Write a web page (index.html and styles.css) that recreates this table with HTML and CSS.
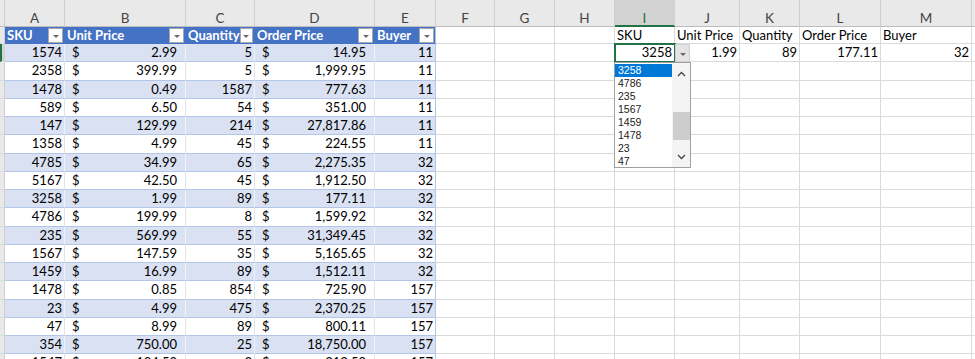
FILE: index.html
```html
<!DOCTYPE html>
<html lang="en">
<head>
    <meta charset="UTF-8">
    <title>Orders - Sheet1</title>
    <link rel="stylesheet" href="styles.css">
</head>
<body>
<div class="sheet">
    <!-- column letters -->
    <div class="row cols">
        <div></div><div>A</div><div>B</div><div>C</div><div>D</div><div>E</div><div>F</div><div>G</div><div>H</div><div class="sel">I</div><div>J</div><div>K</div><div>L</div><div>M</div><div></div>
    </div>

    <!-- table header + lookup header -->
    <div class="row first">
        <div class="rh"></div>
        <div class="th"><span>SKU</span><i class="filter"></i></div>
        <div class="th"><span>Unit Price</span><i class="filter"></i></div>
        <div class="th"><span>Quantity</span><i class="filter"></i></div>
        <div class="th"><span>Order Price</span><i class="filter"></i></div>
        <div class="th end"><span>Buyer</span><i class="filter"></i></div>
        <div></div><div></div><div></div>
        <div>SKU</div><div>Unit Price</div><div>Quantity</div><div>Order Price</div><div>Buyer</div><div></div>
    </div>

    <div class="row band">
        <div class="rh active"></div>
        <div class="t num">1574</div><div class="t acc"><span>$</span><span>2.99</span></div><div class="t num">5</div><div class="t acc"><span>$</span><span>14.95</span></div><div class="t num end">11</div>
        <div></div><div></div><div></div>
        <div class="num current">3258</div><div class="num">1.99</div><div class="num">89</div><div class="num">177.11</div><div class="num">32</div><div></div>
    </div>
    <div class="row">
        <div class="rh"></div>
        <div class="t num">2358</div><div class="t acc"><span>$</span><span>399.99</span></div><div class="t num">5</div><div class="t acc"><span>$</span><span>1,999.95</span></div><div class="t num end">11</div>
        <div></div><div></div><div></div><div></div><div></div><div></div><div></div><div></div><div></div>
    </div>
    <div class="row band">
        <div class="rh"></div>
        <div class="t num">1478</div><div class="t acc"><span>$</span><span>0.49</span></div><div class="t num">1587</div><div class="t acc"><span>$</span><span>777.63</span></div><div class="t num end">11</div>
        <div></div><div></div><div></div><div></div><div></div><div></div><div></div><div></div><div></div>
    </div>
    <div class="row">
        <div class="rh"></div>
        <div class="t num">589</div><div class="t acc"><span>$</span><span>6.50</span></div><div class="t num">54</div><div class="t acc"><span>$</span><span>351.00</span></div><div class="t num end">11</div>
        <div></div><div></div><div></div><div></div><div></div><div></div><div></div><div></div><div></div>
    </div>
    <div class="row band">
        <div class="rh"></div>
        <div class="t num">147</div><div class="t acc"><span>$</span><span>129.99</span></div><div class="t num">214</div><div class="t acc"><span>$</span><span>27,817.86</span></div><div class="t num end">11</div>
        <div></div><div></div><div></div><div></div><div></div><div></div><div></div><div></div><div></div>
    </div>
    <div class="row">
        <div class="rh"></div>
        <div class="t num">1358</div><div class="t acc"><span>$</span><span>4.99</span></div><div class="t num">45</div><div class="t acc"><span>$</span><span>224.55</span></div><div class="t num end">11</div>
        <div></div><div></div><div></div><div></div><div></div><div></div><div></div><div></div><div></div>
    </div>
    <div class="row band">
        <div class="rh"></div>
        <div class="t num">4785</div><div class="t acc"><span>$</span><span>34.99</span></div><div class="t num">65</div><div class="t acc"><span>$</span><span>2,275.35</span></div><div class="t num end">32</div>
        <div></div><div></div><div></div><div></div><div></div><div></div><div></div><div></div><div></div>
    </div>
    <div class="row">
        <div class="rh"></div>
        <div class="t num">5167</div><div class="t acc"><span>$</span><span>42.50</span></div><div class="t num">45</div><div class="t acc"><span>$</span><span>1,912.50</span></div><div class="t num end">32</div>
        <div></div><div></div><div></div><div></div><div></div><div></div><div></div><div></div><div></div>
    </div>
    <div class="row band">
        <div class="rh"></div>
        <div class="t num">3258</div><div class="t acc"><span>$</span><span>1.99</span></div><div class="t num">89</div><div class="t acc"><span>$</span><span>177.11</span></div><div class="t num end">32</div>
        <div></div><div></div><div></div><div></div><div></div><div></div><div></div><div></div><div></div>
    </div>
    <div class="row">
        <div class="rh"></div>
        <div class="t num">4786</div><div class="t acc"><span>$</span><span>199.99</span></div><div class="t num">8</div><div class="t acc"><span>$</span><span>1,599.92</span></div><div class="t num end">32</div>
        <div></div><div></div><div></div><div></div><div></div><div></div><div></div><div></div><div></div>
    </div>
    <div class="row band">
        <div class="rh"></div>
        <div class="t num">235</div><div class="t acc"><span>$</span><span>569.99</span></div><div class="t num">55</div><div class="t acc"><span>$</span><span>31,349.45</span></div><div class="t num end">32</div>
        <div></div><div></div><div></div><div></div><div></div><div></div><div></div><div></div><div></div>
    </div>
    <div class="row">
        <div class="rh"></div>
        <div class="t num">1567</div><div class="t acc"><span>$</span><span>147.59</span></div><div class="t num">35</div><div class="t acc"><span>$</span><span>5,165.65</span></div><div class="t num end">32</div>
        <div></div><div></div><div></div><div></div><div></div><div></div><div></div><div></div><div></div>
    </div>
    <div class="row band">
        <div class="rh"></div>
        <div class="t num">1459</div><div class="t acc"><span>$</span><span>16.99</span></div><div class="t num">89</div><div class="t acc"><span>$</span><span>1,512.11</span></div><div class="t num end">32</div>
        <div></div><div></div><div></div><div></div><div></div><div></div><div></div><div></div><div></div>
    </div>
    <div class="row">
        <div class="rh"></div>
        <div class="t num">1478</div><div class="t acc"><span>$</span><span>0.85</span></div><div class="t num">854</div><div class="t acc"><span>$</span><span>725.90</span></div><div class="t num end">157</div>
        <div></div><div></div><div></div><div></div><div></div><div></div><div></div><div></div><div></div>
    </div>
    <div class="row band">
        <div class="rh"></div>
        <div class="t num">23</div><div class="t acc"><span>$</span><span>4.99</span></div><div class="t num">475</div><div class="t acc"><span>$</span><span>2,370.25</span></div><div class="t num end">157</div>
        <div></div><div></div><div></div><div></div><div></div><div></div><div></div><div></div><div></div>
    </div>
    <div class="row">
        <div class="rh"></div>
        <div class="t num">47</div><div class="t acc"><span>$</span><span>8.99</span></div><div class="t num">89</div><div class="t acc"><span>$</span><span>800.11</span></div><div class="t num end">157</div>
        <div></div><div></div><div></div><div></div><div></div><div></div><div></div><div></div><div></div>
    </div>
    <div class="row band">
        <div class="rh"></div>
        <div class="t num">354</div><div class="t acc"><span>$</span><span>750.00</span></div><div class="t num">25</div><div class="t acc"><span>$</span><span>18,750.00</span></div><div class="t num end">157</div>
        <div></div><div></div><div></div><div></div><div></div><div></div><div></div><div></div><div></div>
    </div>
    <div class="row">
        <div class="rh"></div>
        <div class="t num">1547</div><div class="t acc"><span>$</span><span>104.50</span></div><div class="t num">3</div><div class="t acc"><span>$</span><span>313.50</span></div><div class="t num end">157</div>
        <div></div><div></div><div></div><div></div><div></div><div></div><div></div><div></div><div></div>
    </div>

    <!-- data validation list on I2 -->
    <div class="dv-button"><i class="tri"></i></div>
    <div class="dv-list">
        <ul>
            <li class="picked">3258</li>
            <li>4786</li>
            <li>235</li>
            <li>1567</li>
            <li>1459</li>
            <li>1478</li>
            <li>23</li>
            <li>47</li>
        </ul>
        <div class="scroll">
            <svg width="9" height="6" viewBox="0 0 9 6"><polyline points="1,5 4.5,1.5 8,5" fill="none" stroke="#444" stroke-width="1.3"/></svg>
            <div class="thumb"></div>
            <svg width="9" height="6" viewBox="0 0 9 6"><polyline points="1,1 4.5,4.5 8,1" fill="none" stroke="#444" stroke-width="1.3"/></svg>
        </div>
    </div>
</div>
</body>
</html>
```

FILE: styles.css
```css
* {
    box-sizing: border-box;
    margin: 0;
    padding: 0;
}

body {
    background: #ffffff;
    overflow: hidden;
    font-family: Lato, 'Liberation Sans', sans-serif;
    font-size: 13px;
    color: #000;
}

.sheet {
    position: relative;
    width: 975px;
    height: 359px;
    overflow: hidden;
}

.row {
    display: grid;
    grid-template-columns: 5px 60px 121px 69px 120px 61px 59px 60px 60px 60px 65px 60px 81px 91px 3px;
    height: 18.25px;
}

.row > div {
    border-right: 1px solid #dadada;
    border-bottom: 1px solid #dadada;
    padding: 0 2px;
    line-height: 17px;
    white-space: nowrap;
    overflow: hidden;
}

/* column letters */
.cols {
    height: 27px;
    background: #e9e9e9;
}

.cols > div {
    text-align: center;
    color: #444;
    font-size: 13.5px;
    padding-top: 11px;
    line-height: 15px;
    border-right-color: #cfcfcf;
    border-bottom-color: #bdbdbd;
}

.cols > div.sel {
    background: #d3d3d3;
    color: #217346;
    border-bottom: 2px solid #217346;
}

.first {
    height: 17px;
}

.first > div {
    line-height: 16px;
}

.rh {
    background: #e9e9e9;
    border-right-color: #cfcfcf !important;
}

.rh.active {
    background: #d3d3d3;
    border-left: 2px solid #217346;
}

/* table */
.th {
    background: #4472c4;
    color: #fff;
    font-weight: bold;
    display: flex;
    justify-content: space-between;
    align-items: center;
    border-right-color: #4472c4 !important;
    border-bottom-color: #4472c4 !important;
    padding-right: 1px !important;
}

.th.end {
    border-right-color: #b4c6e7 !important;
}

.filter {
    width: 15px;
    height: 15px;
    background: #fff;
    border: 1px solid #a9a9a9;
    display: flex;
    align-items: center;
    justify-content: center;
}

.filter::after,
.tri {
    content: '';
    display: block;
    margin-top: 2px;
    border-top: 3px solid #6b6b6b;
    border-left: 3px solid transparent;
    border-right: 3px solid transparent;
}

.row > .t {
    border-bottom-color: #b4c6e7;
    border-right-color: #e3e3e3;
}

.band > .t {
    background: #d9e1f2;
    border-right-color: #eef2f9;
}

.row > .t.end {
    border-right-color: #b4c6e7;
}

.num {
    text-align: right;
}

.acc {
    display: flex;
    justify-content: space-between;
    padding: 0 8px 0 7px !important;
}

.current {
    outline: 2px solid #217346;
    outline-offset: -1px;
    background: #fff;
}

/* data validation dropdown */
.dv-button {
    position: absolute;
    left: 675px;
    top: 44px;
    width: 15px;
    height: 18px;
    background: #e4e4e4;
    border: 1px solid #d0d0d0;
    display: flex;
    align-items: center;
    justify-content: center;
}

.tri {
    border-top-color: #666;
}

.dv-list {
    position: absolute;
    left: 614px;
    top: 62px;
    width: 77px;
    height: 106px;
    background: #fff;
    border: 1px solid #a0a0a0;
    display: flex;
    font-family: 'Liberation Sans', sans-serif;
    font-size: 10.5px;
}

.dv-list ul {
    list-style: none;
    flex: 1;
    padding-top: 1px;
}

.dv-list li {
    height: 13px;
    line-height: 13px;
    padding-left: 3px;
    color: #222;
}

.dv-list li.picked {
    background: #0078d7;
    color: #fff;
}

.scroll {
    width: 18px;
    background: #f4f4f4;
    display: flex;
    flex-direction: column;
    align-items: center;
    padding-top: 8px;
}

.thumb {
    width: 17px;
    height: 28px;
    background: #cdcdcd;
    margin: 35px 0 14px;
}
```
